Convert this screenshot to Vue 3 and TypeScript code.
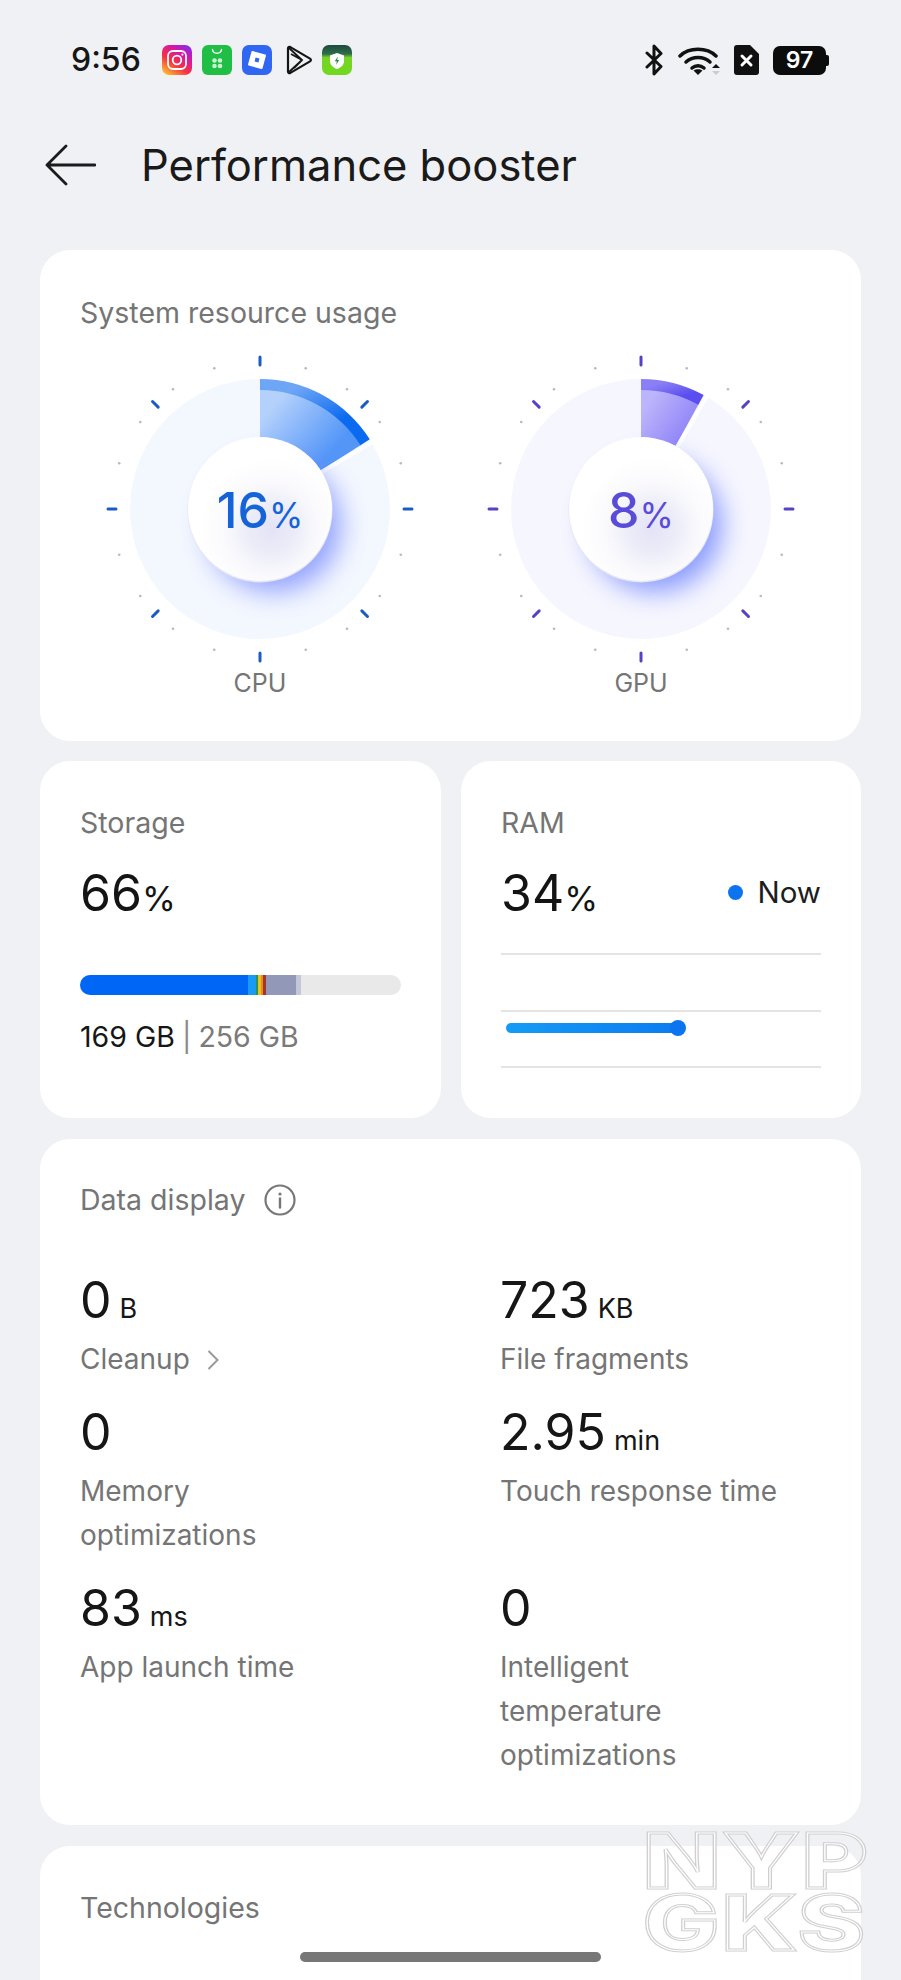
<script setup lang="ts">
type Gauge = {
  name: string;
  value: number;
  tick: string;
  text: string;
  disc: string;
  light: string;
  mid: string;
  band_a: string;
  band_b: string;
  glow: string;
};

type Stat = {
  value: string;
  unit?: string;
  label: string;
  link?: boolean;
};

const gauges: Gauge[] = [
  {
    name: "CPU",
    value: 16,
    tick: "#1a5cc4",
    text: "#1463d8",
    disc: "#f3f7fe",
    light: "#b4d1fc",
    mid: "#5496f8",
    band_a: "#6ea6f6",
    band_b: "#0a6af0",
    glow: "#6f83ff",
  },
  {
    name: "GPU",
    value: 8,
    tick: "#5443c4",
    text: "#5a4bd8",
    disc: "#f6f6fe",
    light: "#bdb5fb",
    mid: "#9489f8",
    band_a: "#8a80f4",
    band_b: "#5b4ef0",
    glow: "#6078ff",
  },
];

const stats: Stat[] = [
  { value: "0", unit: "B", label: "Cleanup", link: true },
  { value: "723", unit: "KB", label: "File fragments" },
  { value: "0", label: "Memory optimizations" },
  { value: "2.95", unit: "min", label: "Touch response time" },
  { value: "83", unit: "ms", label: "App launch time" },
  { value: "0", label: "Intelligent temperature optimizations" },
];

const storage_parts = [
  { color: "#0066f5", width: 168 },
  { color: "#1a9bf2", width: 8 },
  { color: "#2f8f5a", width: 2 },
  { color: "#e7c11f", width: 3 },
  { color: "#e88a1c", width: 2 },
  { color: "#a3352c", width: 3 },
  { color: "#9299b8", width: 30 },
  { color: "#c3c7d8", width: 5 },
];

const C = 160;

function point(r: number, deg: number) {
  const a = (deg * Math.PI) / 180;
  return { x: C + r * Math.sin(a), y: C - r * Math.cos(a) };
}

function sector(r1: number, r2: number, deg: number) {
  const a = point(r1, 0);
  const b = point(r2, 0);
  const c = point(r2, deg);
  const d = point(r1, deg);
  return `M${a.x} ${a.y}L${b.x} ${b.y}A${r2} ${r2} 0 0 1 ${c.x} ${c.y}L${d.x} ${d.y}A${r1} ${r1} 0 0 0 ${a.x} ${a.y}Z`;
}

const majors = [0, 45, 90, 135, 180, 225, 270, 315].map((deg) => ({
  deg,
  a: point(144, deg),
  b: point(152, deg),
}));

const dots = Array.from({ length: 20 }, (_, i) => i * 18)
  .filter((deg) => deg % 90 !== 0)
  .map((deg) => point(148, deg));
</script>

<template>
  <div class="page">
    <div class="status">
      <span class="time">9:56</span>
      <div class="apps">
        <svg width="30" height="30" viewBox="0 0 30 30">
          <defs>
            <linearGradient id="ig" x1="0.1" y1="1" x2="0.8" y2="0">
              <stop offset="0" stop-color="#fdc830" />
              <stop offset="0.4" stop-color="#f5333f" />
              <stop offset="0.75" stop-color="#d516a8" />
              <stop offset="1" stop-color="#8a2ce2" />
            </linearGradient>
          </defs>
          <rect width="30" height="30" rx="7" fill="url(#ig)" />
          <rect x="6" y="6" width="18" height="18" rx="5" fill="none" stroke="#fff" stroke-width="1.8" />
          <circle cx="15" cy="15" r="4.3" fill="none" stroke="#fff" stroke-width="1.8" />
          <circle cx="20.4" cy="9.6" r="1.1" fill="#fff" />
        </svg>
        <svg width="30" height="30" viewBox="0 0 30 30">
          <rect width="30" height="30" rx="6" fill="#1fbe45" />
          <path d="M10.5 4.5c.6 5 8.4 5 9 0" fill="none" stroke="#fff" stroke-width="1.4" stroke-linecap="round" />
          <circle cx="12.5" cy="15.5" r="2.3" fill="#c9f2d2" />
          <circle cx="18" cy="15.5" r="2.3" fill="#c9f2d2" />
          <circle cx="12.5" cy="21" r="2.3" fill="#c9f2d2" />
          <circle cx="18" cy="21" r="2.3" fill="#c9f2d2" />
        </svg>
        <svg width="30" height="30" viewBox="0 0 30 30">
          <rect width="30" height="30" rx="7" fill="#2f66f2" />
          <rect x="7.5" y="7.5" width="15" height="15" rx="1" fill="#fff" transform="rotate(15 15 15)" />
          <rect x="13" y="13" width="4" height="4" fill="#2f66f2" transform="rotate(15 15 15)" />
        </svg>
        <svg class="play" width="26" height="30" viewBox="0 0 26 30">
          <path d="M2 3.5c0-1.4 1.2-2 2.4-1.4L24 13.6c1.2.8 1.2 2 0 2.8L4.400 27.900C3.200 28.500 2 27.900 2 26.500Z" fill="none" stroke="#151515" stroke-width="2.200" stroke-linejoin="round" />
          <path d="M3 3l13 12L3 27M16 15l-11-6M16 15l-8 8" fill="none" stroke="#151515" stroke-width="1.800" />
        </svg>
        <svg width="30" height="30" viewBox="0 0 30 30">
          <defs>
            <linearGradient id="sh" x1="0" y1="0" x2="0" y2="1">
              <stop offset="0" stop-color="#1d4a3e" />
              <stop offset="0.3" stop-color="#2f6e4a" />
              <stop offset="0.42" stop-color="#78d428" />
              <stop offset="1" stop-color="#70d81e" />
            </linearGradient>
          </defs>
          <rect width="30" height="30" rx="7" fill="url(#sh)" />
          <path d="M15 8l7 2.400v5.600c0 4-3 6.500-7 8-4-1.500-7-4-7-8v-5.600Z" fill="#fff" />
          <path d="M15.800 11.500l-3 4.800h2l-.6 3.500 3-4.800h-2Z" fill="#2b8a4a" />
        </svg>
      </div>
      <div class="sys">
        <svg width="19" height="32" viewBox="0 0 19 32">
          <path d="M2 9l14 13.500L9 30V2l7 7.500L2 23" fill="none" stroke="#111" stroke-width="3" stroke-linejoin="round" stroke-linecap="round" />
        </svg>
        <svg width="43" height="31" viewBox="0 0 43 31">
          <path d="M2 11C11 2 29 2 38 11" fill="none" stroke="#111" stroke-width="3.500" stroke-linecap="round" />
          <path d="M8 17c6.500-6 17.500-6 24 0" fill="none" stroke="#111" stroke-width="3.500" stroke-linecap="round" />
          <path d="M14 23c3.500-3 8.500-3 12 0" fill="none" stroke="#111" stroke-width="3.500" stroke-linecap="round" />
          <path d="M20 30l-4.500-4.500c2.500-1.600 6.500-1.600 9 0Z" fill="#111" />
          <path d="M38 19l4 4h-8Z" fill="#111" />
          <path d="M38 30l4-4h-8Z" fill="#ccc" />
        </svg>
        <svg class="sim" width="25" height="30" viewBox="0 0 25 30">
          <path d="M3 0h13l9 9v18a3 3 0 0 1-3 3H3a3 3 0 0 1-3-3V3a3 3 0 0 1 3-3Z" fill="#111" />
          <path d="M8 11l9 9M17 11l-9 9" stroke="#fff" stroke-width="3" stroke-linecap="round" />
        </svg>
        <div class="battery"><span>97</span></div>
      </div>
    </div>

    <header class="head">
      <svg width="52" height="42" viewBox="0 0 52 42">
        <path d="M51 21H3M22 2L3 21l19 19" fill="none" stroke="#1b1b1b" stroke-width="2.800" stroke-linecap="round" stroke-linejoin="round" />
      </svg>
      <h1>Performance booster</h1>
    </header>

    <section class="card usage">
      <h2>System resource usage</h2>
      <div class="gauges">
        <div v-for="g in gauges" :key="g.name" class="gauge">
          <div class="dial">
            <svg width="320" height="320" viewBox="0 0 320 320">
              <defs>
                <linearGradient :id="`fill_${g.name}`" x1="0.2" y1="0.1" x2="0.85" y2="0.55">
                  <stop offset="0" :stop-color="g.light" />
                  <stop offset="1" :stop-color="g.mid" />
                </linearGradient>
                <linearGradient :id="`band_${g.name}`" x1="0.5" y1="0" x2="0.9" y2="0.5">
                  <stop offset="0" :stop-color="g.band_a" />
                  <stop offset="1" :stop-color="g.band_b" />
                </linearGradient>
                <radialGradient :id="`knob_${g.name}`" cx="0.58" cy="0.64" r="0.5">
                  <stop offset="0" stop-color="#e3e3f6" />
                  <stop offset="0.3" stop-color="#ebebf8" />
                  <stop offset="0.66" stop-color="#fafafd" />
                  <stop offset="1" stop-color="#ffffff" />
                </radialGradient>
                <filter :id="`blur_${g.name}`" x="-50%" y="-50%" width="200%" height="200%">
                  <feGaussianBlur stdDeviation="13" />
                </filter>
              </defs>
              <circle cx="160" cy="160" r="130" :fill="g.disc" />
              <line
                v-for="m in majors"
                :key="m.deg"
                :x1="m.a.x"
                :y1="m.a.y"
                :x2="m.b.x"
                :y2="m.b.y"
                :stroke="g.tick"
                stroke-width="3"
                stroke-linecap="round"
              />
              <circle v-for="(d, i) in dots" :key="i" :cx="d.x" :cy="d.y" r="1.300" fill="#b4bac6" />
              <path :d="sector(70, 120, g.value * 3.6)" :fill="`url(#fill_${g.name})`" />
              <path :d="sector(119, 130, g.value * 3.6)" :fill="`url(#band_${g.name})`" />
              <line
                :x1="point(68, g.value * 3.6 + 1.500).x"
                :y1="point(68, g.value * 3.6 + 1.500).y"
                :x2="point(131, g.value * 3.6 + 1.500).x"
                :y2="point(131, g.value * 3.6 + 1.500).y"
                stroke="#ffffff"
                stroke-width="4"
              />
              <circle cx="174" cy="176" r="67" :fill="g.glow" opacity="0.72" :filter="`url(#blur_${g.name})`" />
              <circle cx="160" cy="161" r="72.500" fill="#e6e6f4" />
              <circle cx="160" cy="160" r="72" :fill="`url(#knob_${g.name})`" />
            </svg>
            <div class="reading" :style="{ color: g.text }">
              <span class="num">{{ g.value }}</span><span class="pct">%</span>
            </div>
          </div>
          <span class="gauge_name">{{ g.name }}</span>
        </div>
      </div>
    </section>

    <div class="pair">
      <section class="card storage">
        <h2>Storage</h2>
        <div class="big"><span class="num">66</span><span class="pct">%</span></div>
        <div class="bar">
          <i
            v-for="(p, i) in storage_parts"
            :key="i"
            :style="{ background: p.color, width: p.width + 'px' }"
          />
        </div>
        <p class="used">169 GB <em>|</em> <span>256 GB</span></p>
      </section>

      <section class="card ram">
        <h2>RAM</h2>
        <div class="ram_top">
          <div class="big"><span class="num">34</span><span class="pct">%</span></div>
          <div class="now"><i />Now</div>
        </div>
        <div class="chart">
          <hr /><hr /><hr />
          <div class="series"><i /></div>
        </div>
      </section>
    </div>

    <section class="card data">
      <div class="data_head">
        <h2>Data display</h2>
        <svg width="32" height="32" viewBox="0 0 32 32">
          <circle cx="16" cy="16" r="14.500" fill="none" stroke="#777" stroke-width="2.200" />
          <circle cx="16" cy="10" r="1.600" fill="#777" />
          <path d="M16 14.500v9" stroke="#777" stroke-width="2.400" stroke-linecap="round" />
        </svg>
      </div>
      <div class="stats">
        <div v-for="s in stats" :key="s.label" class="stat">
          <div class="stat_value">
            <span class="num">{{ s.value }}</span><span v-if="s.unit" class="unit">{{ s.unit }}</span>
          </div>
          <div class="stat_label">
            {{ s.label }}
            <svg v-if="s.link" width="14" height="22" viewBox="0 0 14 22">
              <path d="M2.500 2l9 9-9 9" fill="none" stroke="#9a9a9a" stroke-width="2" />
            </svg>
          </div>
        </div>
      </div>
    </section>

    <section class="card tech">
      <h2>Technologies</h2>
    </section>

    <div class="watermark">
      <span data-t="NYP">NYP</span>
      <span data-t="GKS">GKS</span>
    </div>
    <div class="home_bar" />
  </div>
</template>

<style>
html,
body {
  margin: 0;
  background: #f0f1f4;
}
</style>

<style scoped>
.page {
  position: relative;
  width: 901px;
  height: 1980px;
  overflow: hidden;
  background: #f0f1f4;
  font-family: Inter, "Liberation Sans", sans-serif;
  color: #1a1a1a;
}

.status {
  display: flex;
  align-items: center;
  height: 30px;
  padding: 45px 75px 0 71px;
}

.time {
  width: 91px;
  font-size: 32px;
  font-weight: 500;
  line-height: 30px;
  color: #161616;
}

.apps {
  display: flex;
  align-items: center;
  gap: 10px;
}

.play {
  margin: 0 0 0 4px;
}

.sys {
  display: flex;
  align-items: center;
  gap: 14px;
  margin-left: auto;
}

.sim {
  margin-left: -1px;
}

.battery {
  position: relative;
  display: grid;
  width: 53px;
  height: 29px;
  place-items: center;
  border-radius: 7px;
  background: #0c0c0c;
  color: #fff;
  font-size: 23px;
  font-weight: 600;
}

.battery::after {
  content: "";
  position: absolute;
  right: -3px;
  top: 9px;
  width: 3px;
  height: 11px;
  border-radius: 0 2px 2px 0;
  background: #0c0c0c;
}

.head {
  display: flex;
  align-items: center;
  gap: 45px;
  height: 60px;
  padding: 60px 0 0 44px;
  margin-bottom: 55px;
}

.head h1 {
  margin: 0;
  font-size: 43.500px;
  font-weight: 400;
  color: #1a1a1a;
}

.card {
  border-radius: 30px;
  background: #ffffff;
  box-sizing: border-box;
}

h2 {
  margin: 0;
  font-size: 28.500px;
  font-weight: 400;
  line-height: 36px;
  color: #757575;
}

.usage {
  height: 491px;
  margin: 0 40px;
  padding: 45px 40px 0;
}

.gauges {
  display: flex;
  justify-content: center;
  gap: 61px;
  margin: 18px -40px 0;
}

.gauge {
  display: flex;
  flex-direction: column;
  align-items: center;
}

.dial {
  position: relative;
  width: 320px;
  height: 320px;
}

.dial svg {
  display: block;
}

.reading {
  position: absolute;
  inset: 0;
  display: flex;
  align-items: baseline;
  justify-content: center;
  padding-top: 131px;
  box-sizing: border-box;
}

.reading .num {
  font-size: 50px;
  font-weight: 450;
  line-height: 60px;
}

.reading .pct {
  font-size: 35px;
  line-height: 1;
}

.gauge_name {
  font-size: 25px;
  line-height: 28px;
  color: #757575;
}

.pair {
  display: grid;
  grid-template-columns: 401px 400px;
  gap: 20px;
  margin: 20px 40px 21px;
}

.storage,
.ram {
  height: 357px;
  padding: 44px 40px 0;
}

.big {
  display: flex;
  align-items: baseline;
  height: 60px;
  margin-top: 22px;
  color: #141414;
}

.big .num {
  font-size: 50px;
  line-height: 60px;
}

.big .pct {
  font-size: 34.500px;
  line-height: 1;
}

.bar {
  display: flex;
  height: 20px;
  margin-top: 52px;
  overflow: hidden;
  border-radius: 10px;
  background: #e9e9e9;
}

.bar i {
  display: block;
  flex: none;
  height: 100%;
}

.used {
  margin: 24px 0 0;
  font-size: 28.500px;
  line-height: 36px;
  color: #161616;
}

.used em {
  margin: 0 -1px;
  font-style: normal;
  color: #8a8a8a;
}

.used span {
  color: #7a7a7a;
}

.ram_top {
  display: flex;
  align-items: center;
  justify-content: space-between;
}

.now {
  display: flex;
  align-items: center;
  gap: 14px;
  margin-top: 20px;
  font-size: 29.500px;
  color: #1d1d1d;
}

.now i {
  width: 15px;
  height: 15px;
  border-radius: 50%;
  background: #0b74ee;
}

.chart {
  position: relative;
  display: flex;
  flex-direction: column;
  justify-content: space-between;
  height: 115px;
  margin-top: 30px;
}

.chart hr {
  width: 100%;
  height: 2px;
  margin: 0;
  border: 0;
  background: #e4e4e4;
}

.series {
  position: absolute;
  left: 5px;
  top: 70px;
  width: 172px;
  height: 10px;
  border-radius: 5px;
  background: linear-gradient(90deg, #149bf5, #0b7cf0);
}

.series i {
  position: absolute;
  right: -8px;
  top: -3px;
  width: 16px;
  height: 16px;
  border-radius: 50%;
  background: #0b74ee;
}

.data {
  height: 686px;
  margin: 0 40px;
  padding: 43px 40px 0;
}

.data_head {
  display: flex;
  align-items: center;
  gap: 19px;
}

.stats {
  display: grid;
  grid-template-columns: 420px 1fr;
  row-gap: 21px;
  margin-top: 52px;
}

.stat_value {
  display: flex;
  align-items: baseline;
  gap: 8px;
  height: 60px;
  color: #161616;
}

.stat_value .num {
  font-size: 50px;
  line-height: 60px;
}

.stat_value .unit {
  font-size: 27px;
  line-height: 1;
}

.stat_label {
  max-width: 285px;
  margin-top: 7px;
  font-size: 28px;
  line-height: 44px;
  color: #757575;
}

.stat_label svg {
  margin-left: 8px;
  vertical-align: -2px;
}

.tech {
  height: 300px;
  margin: 21px 40px 0;
  padding: 44px 40px 0;
}

.watermark {
  position: absolute;
  left: 643px;
  top: 1829px;
  display: flex;
  flex-direction: column;
  transform: scaleX(1.33);
  transform-origin: 0 0;
  font-size: 76px;
  font-weight: 800;
  line-height: 62px;
  letter-spacing: 2px;
}

.watermark span {
  position: relative;
  color: transparent;
  -webkit-text-stroke: 3px #cfcfcf;
}

.watermark span::after {
  content: attr(data-t);
  position: absolute;
  left: 0;
  top: 0;
  -webkit-text-stroke: 1px #ffffff;
}

.home_bar {
  position: absolute;
  left: 300px;
  top: 1952px;
  width: 301px;
  height: 10px;
  border-radius: 5px;
  background: #777777;
}
</style>
